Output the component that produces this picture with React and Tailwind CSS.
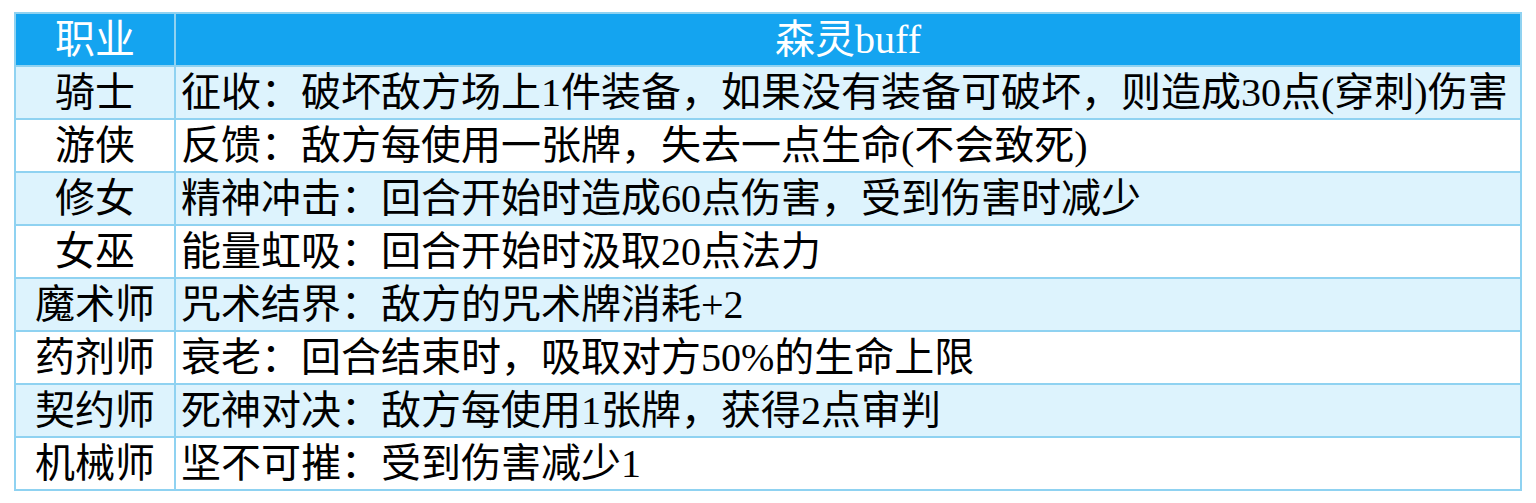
import React from 'react';

const ROWS = [
  ['骑士', '征收：破坏敌方场上1件装备，如果没有装备可破坏，则造成30点(穿刺)伤害'],
  ['游侠', '反馈：敌方每使用一张牌，失去一点生命(不会致死)'],
  ['修女', '精神冲击：回合开始时造成60点伤害，受到伤害时减少'],
  ['女巫', '能量虹吸：回合开始时汲取20点法力'],
  ['魔术师', '咒术结界：敌方的咒术牌消耗+2'],
  ['药剂师', '衰老：回合结束时，吸取对方50%的生命上限'],
  ['契约师', '死神对决：敌方每使用1张牌，获得2点审判'],
  ['机械师', '坚不可摧：受到伤害减少1'],
];

export default function App() {
  return (
    <div
      className="w-[1536px] h-[503px] bg-white pt-[12px] pl-[14px]"
      style={{ fontFamily: '"Liberation Serif", "Noto Sans CJK SC", serif' }}
    >
      <table className="table-fixed border-collapse w-[1508px] text-[40px] leading-none text-black">
        <colgroup>
          <col className="w-[160px]" />
          <col />
        </colgroup>
        <thead>
          <tr className="h-[53px] bg-[#14a4f0] text-white">
            <th className="border-2 border-[#8fd2f1] font-normal text-center">职业</th>
            <th className="border-2 border-[#8fd2f1] font-normal text-center">森灵buff</th>
          </tr>
        </thead>
        <tbody>
          {ROWS.map(([job, buff], i) => (
            <tr key={job} className={`h-[53px] ${i % 2 === 0 ? 'bg-[#ddf3fd]' : 'bg-white'}`}>
              <td className="border-2 border-[#8fd2f1] text-center">{job}</td>
              <td className="border-2 border-[#8fd2f1] pl-[5px] text-left whitespace-nowrap">{buff}</td>
            </tr>
          ))}
        </tbody>
      </table>
    </div>
  );
}
